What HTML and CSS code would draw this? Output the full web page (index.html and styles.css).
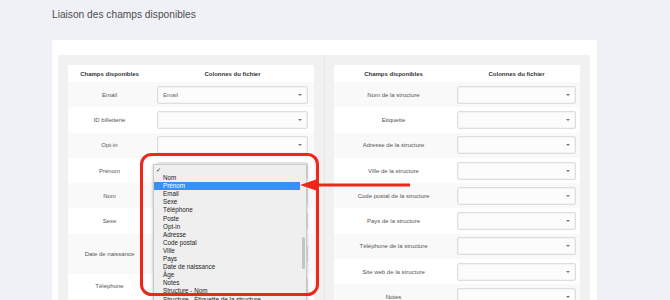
FILE: index.html
```html
<!DOCTYPE html>
<html>
<head>
    <meta charset="UTF-8">
    <title>Liaison des champs disponibles</title>
    <link rel="stylesheet" href="styles.css">
</head>
<body>
<h1 class="title">Liaison des champs disponibles</h1>
<div class="panel">
    <div class="well">
        <div class="col col-left">
            <table class="map map-left">
                <tr class="head"><th>Champs disponibles</th><th>Colonnes du fichier</th></tr>
                <tr><td>Email</td><td><div class="sel">Email<i></i></div></td></tr>
                <tr><td>ID billetterie</td><td><div class="sel"><i></i></div></td></tr>
                <tr><td>Opt-in</td><td><div class="sel"><i></i></div></td></tr>
                <tr><td>Prénom</td><td><div class="sel"><i></i></div></td></tr>
                <tr><td>Nom</td><td><div class="sel"><i></i></div></td></tr>
                <tr><td>Sexe</td><td><div class="sel"><i></i></div></td></tr>
                <tr class="tall"><td>Date de naissance</td><td><div class="sel"><i></i></div></td></tr>
                <tr><td>Téléphone</td><td><div class="sel"><i></i></div></td></tr>
                <tr><td>Poste</td><td><div class="sel"><i></i></div></td></tr>
            </table>
        </div>
        <div class="col col-right">
            <table class="map map-right">
                <tr class="head"><th>Champs disponibles</th><th>Colonnes du fichier</th></tr>
                <tr><td>Nom de la structure</td><td><div class="sel"><i></i></div></td></tr>
                <tr><td>Etiquette</td><td><div class="sel"><i></i></div></td></tr>
                <tr><td>Adresse de la structure</td><td><div class="sel"><i></i></div></td></tr>
                <tr><td>Ville de la structure</td><td><div class="sel"><i></i></div></td></tr>
                <tr><td>Code postal de la structure</td><td><div class="sel"><i></i></div></td></tr>
                <tr><td>Pays de la structure</td><td><div class="sel"><i></i></div></td></tr>
                <tr><td>Téléphone de la structure</td><td><div class="sel"><i></i></div></td></tr>
                <tr><td>Site web de la structure</td><td><div class="sel"><i></i></div></td></tr>
                <tr><td>Notes</td><td><div class="sel"><i></i></div></td></tr>
            </table>
        </div>
    </div>
</div>

<!-- native option list opened on the "Prénom" select -->
<ul class="dropdown">
    <li class="checked">&#10003;</li>
    <li>Nom</li>
    <li class="hover">Prénom</li>
    <li>Email</li>
    <li>Sexe</li>
    <li>Téléphone</li>
    <li>Poste</li>
    <li>Opt-in</li>
    <li>Adresse</li>
    <li>Code postal</li>
    <li>Ville</li>
    <li>Pays</li>
    <li>Date de naissance</li>
    <li>Âge</li>
    <li>Notes</li>
    <li>Structure - Nom</li>
    <li>Structure - Étiquette de la structure</li>
    <li>Structure - Adresse</li>
    <span class="thumb"></span>
</ul>

<svg class="annot" width="670" height="300" viewBox="0 0 670 300">
    <rect x="141.5" y="154.5" width="176" height="140" rx="10" ry="10" fill="none" stroke="#f0261b" stroke-width="3"/>
    <line x1="314" y1="185" x2="410" y2="185" stroke="#f0261b" stroke-width="3"/>
    <polygon points="300,185 319,178.5 319,191.5" fill="#f0261b"/>
</svg>
</body>
</html>
```

FILE: styles.css
```css
*{ margin: 0; padding: 0; box-sizing: border-box;}
li{ list-style: none;}
body{
    background: #f0f1f6;
    font-family: "Liberation Sans", Arial, sans-serif;
    color: #555;
    overflow: hidden;
    height: 300px;
}
.title{
    font-size: 10.2px;
    font-weight: normal;
    color: #4d4d4d;
    line-height: 12px;
    padding: 9px 0 0 52px;
}
.panel{
    margin: 19px 0 0 52px;
    width: 545px;
    background: #fff;
    padding: 15px 7px 0 6px;
}
.well{
    display: flex;
    background: #f1f1f1;
}
.col{
    padding: 10px;
}
.col-left{
    width: 267px;
    border-right: 1px solid #e6e6e6;
}
.col-right{
    flex: 1;
    padding-left: 9px;
}
.map{
    width: 100%;
    border-collapse: collapse;
    background: #fff;
    font-size: 6px;
    text-align: center;
}
.map th{
    height: 17px;
    font-weight: bold;
    color: #333;
    vertical-align: middle;
}
.map td{
    height: 25.3px;
    vertical-align: middle;
    color: #555;
}
.map tr:nth-child(even) td{
    background: #f9f9f9;
}
.map tr.tall td{
    height: 40px;
}
.map-left th:first-child, .map-left td:first-child{ width: 83px;}
.map-left td + td{ padding: 0 6px;}
.map-right th:first-child, .map-right td:first-child{ width: 119px;}
.map-right td + td{ padding: 0 4px;}
.sel{
    position: relative;
    height: 18px;
    line-height: 16px;
    border: 1px solid #dedede;
    border-radius: 2px;
    background: #fcfcfc;
    box-shadow: inset 0 0 0 1px #f3f3f3;
    text-align: left;
    padding-left: 5px;
    color: #666;
}
.sel i{
    position: absolute;
    right: 5px;
    top: 7px;
    border-left: 2px solid transparent;
    border-right: 2px solid transparent;
    border-top: 2px solid #777;
}
.dropdown{
    position: absolute;
    left: 153px;
    top: 164px;
    width: 154px;
    height: 150px;
    background: #efefef;
    border: 1px solid #c9c9c9;
    box-shadow: 0 1px 3px rgba(0,0,0,.25);
    padding-top: 1px;
    font-size: 6.3px;
    line-height: 8.1px;
    color: #222;
    overflow: hidden;
}
.dropdown li{
    padding-left: 9px;
    margin-right: 6px;
    white-space: nowrap;
}
.dropdown li.checked{
    padding-left: 2px;
    font-size: 6px;
}
.dropdown li.hover{
    background: #3b8ff0;
    color: #fff;
}
.dropdown .thumb{
    position: absolute;
    right: 1px;
    top: 72px;
    width: 3px;
    height: 32px;
    border-radius: 2px;
    background: #c4c4c4;
}
.annot{
    position: absolute;
    left: 0;
    top: 0;
    pointer-events: none;
}
```
